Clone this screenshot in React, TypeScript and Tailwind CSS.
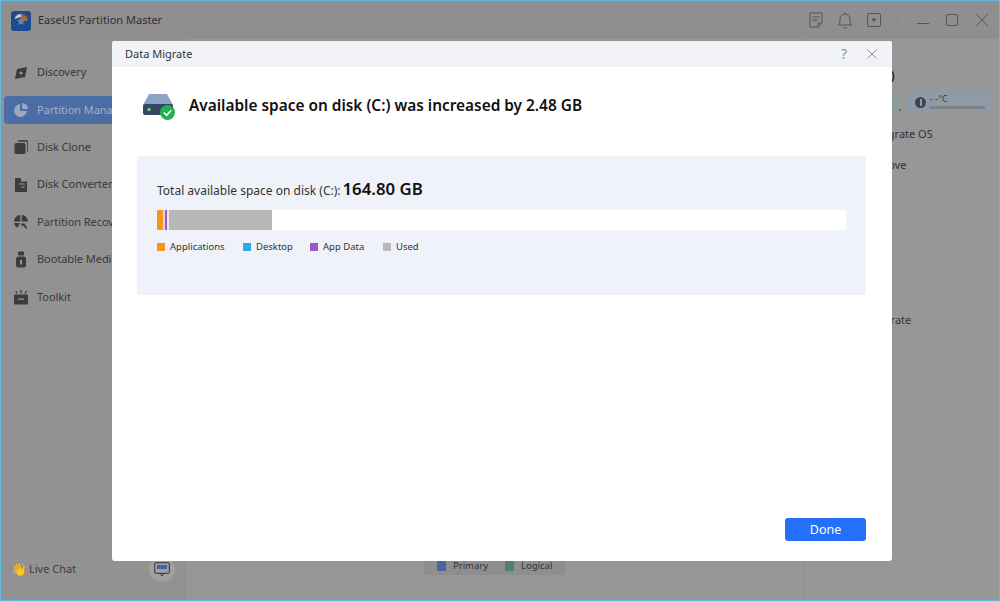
import React from "react";

const F = "font-['Noto_Sans','Open_Sans',sans-serif]";

function NavItem({ label, active, icon }: { label: string; active?: boolean; icon: React.ReactNode }) {
  return (
    <div className={`flex items-center h-[28px] mb-[9.4px] mx-[3px] pl-[9px] rounded-[4px] whitespace-nowrap overflow-hidden ${active ? "bg-[#4a6da6]" : ""}`}>
      <span className={`w-[16px] h-[18px] flex items-center justify-center mr-[8px] ${active ? "text-[#9aa9bf]" : "text-[#3c3c3f]"}`}>{icon}</span>
      <span className={`text-[11px] tracking-[-0.05px] ${active ? "text-[#a3afc2]" : "text-[#38383a]"}`}>{label}</span>
    </div>
  );
}

const I = {
  compass: (
    <svg width="14" height="14" viewBox="0 0 14 14" fill="currentColor"><path d="M3 3 13 1 11 11 1 13Z" /><circle cx="7" cy="7" r="1.6" fill="#979797" /></svg>
  ),
  pie: (
    <svg width="16" height="16" viewBox="0 0 16 16" fill="currentColor"><path d="M7 2a6.5 6.5 0 1 0 7 7H7Z" /><path d="M9 1a6 6 0 0 1 6 6H9Z" /></svg>
  ),
  clone: (
    <svg width="15" height="16" viewBox="0 0 15 16" fill="currentColor"><path d="M4 1h9a1.500 1.500 0 0 1 1 1v10a1 1 0 0 1-1 1V3H4Z" opacity=".8" /><rect x="0.500" y="4" width="11" height="11" rx="1.500" /></svg>
  ),
  conv: (
    <svg width="14" height="16" viewBox="0 0 14 16" fill="currentColor"><path d="M1 1h6v3h6v11H1Z" /><path d="M7 4h5M5 7h6M7 10h4" stroke="#979797" strokeWidth="1.200" /></svg>
  ),
  rec: (
    <svg width="16" height="16" viewBox="0 0 16 16" fill="currentColor"><path d="M7.300 1v6.500H1A6.500 6.500 0 0 1 7.300 1ZM8.700 1A6.500 6.500 0 0 1 15 7.500H8.700ZM1 9h6l-2.500 5A6.500 6.500 0 0 1 1 9Z" /><path d="M8 9.500h3.500l3 5h-2l-2-3-1.500 1Z" /></svg>
  ),
  usb: (
    <svg width="12" height="17" viewBox="0 0 12 17" fill="currentColor"><rect x="3" y="0.500" width="6" height="4" rx="1" /><rect x="1" y="5.500" width="10" height="11" rx="2.500" /><rect x="5" y="9" width="2" height="4.500" fill="#979797" /></svg>
  ),
  kit: (
    <svg width="16" height="16" viewBox="0 0 16 16" fill="currentColor"><rect x="1" y="5.500" width="14" height="10" rx="1" /><rect x="5" y="9.500" width="6" height="1.300" fill="#979797" /><path d="M4 4.500 3 2M8 4.500V1M12 4.500 13.500 2" stroke="currentColor" strokeWidth="1.300" /></svg>
  ),
};

function Legend({ color, label, w }: { color: string; label: string; w: string }) {
  return (
    <div className={`flex items-center ${w}`}>
      <span className={`w-[8px] h-[8px] mr-[5px] ${color}`} />
      <span className="text-[9.500px] leading-[12px] text-[#333]">{label}</span>
    </div>
  );
}

export default function App() {
  return (
    <div className={`${F} relative w-[1000px] h-[601px] overflow-hidden bg-[#979797] border border-[#5fb8de] flex flex-col`}>
      {/* title bar */}
      <header className="h-[38px] shrink-0 bg-[#8f8f8f] flex items-center pl-[9px]">
        <svg width="22" height="22" viewBox="0 0 22 22" className="mr-[6px] mt-[1px]">
          <rect width="20" height="20" x="1" y="1" rx="3" fill="#1f4a8c" />
          <path d="M11 4a7 7 0 0 1 7 7h-7Z" fill="#b0641c" />
          <path d="M4.500 9A7 7 0 0 1 11 4v3Z" fill="#c9c9c9" />
          <path d="m11 7 1.300 2.800 3 .3-2.300 2 .7 3-2.700-1.600-2.700 1.600.7-3-2.300-2 3-.3Z" fill="#5f86c0" />
        </svg>
        <span className="text-[11px] text-[#2f2f31]">EaseUS Partition Master</span>
        <div className="ml-auto flex items-center text-[#555] pr-[11px]">
          <svg width="14" height="16" viewBox="0 0 14 16" fill="none" stroke="currentColor" strokeWidth="1" className="mr-[14px]"><path d="M1 1h12v10l-4 4H1Z" /><path d="M3.500 5h7M3.500 8h5" /><path d="M9 15v-4h4" /></svg>
          <svg width="16" height="17" viewBox="0 0 16 17" fill="none" stroke="currentColor" strokeWidth="1" className="mr-[14px]"><path d="M1.500 13c1.500-1.500 1.500-3 1.500-6a5 5 0 0 1 10 0c0 3 0 4.500 1.500 6Z" /><path d="M6 15a2.200 2.200 0 0 0 4 0M8 2V.500" /></svg>
          <svg width="14" height="14" viewBox="0 0 14 14" fill="none" stroke="currentColor" strokeWidth="1" className="mr-[16px]"><rect x=".5" y=".5" width="13" height="13" rx="1.500" /><path d="M5 6h4L7 8.500Z" fill="currentColor" /></svg>
          <span className="w-px h-[19px] bg-[#888] mr-[19px]" />
          <span className="w-[12px] h-px bg-[#555] mr-[17px] mt-[7px]" />
          <span className="w-[12px] h-[12px] border border-[#555] rounded-[2px] mr-[18px]" />
          <svg width="12" height="12" viewBox="0 0 12 12" stroke="currentColor" strokeWidth="1"><path d="M.5.5l11 11M11.500.5l-11 11" /></svg>
        </div>
      </header>

      <div className="flex-1 flex min-h-0">
        {/* sidebar */}
        <aside className="w-[184px] shrink-0 bg-[#929292] flex flex-col pt-[19.500px]">
          <NavItem label="Discovery" icon={I.compass} />
          <NavItem label="Partition Manager" active icon={I.pie} />
          <NavItem label="Disk Clone" icon={I.clone} />
          <NavItem label="Disk Converter" icon={I.conv} />
          <NavItem label="Partition Recovery" icon={I.rec} />
          <NavItem label="Bootable Media" icon={I.usb} />
          <NavItem label="Toolkit" icon={I.kit} />
          <div className="mt-auto mb-[18px] flex items-center pl-[10px] pr-[10px] relative">
            <span className="text-[13px] leading-[16px] mr-[2px]">👋</span>
            <span className="text-[11px] text-[#3d3d40]">Live Chat</span>
            <span className="ml-auto w-[26px] h-[26px] rounded-full bg-[#a0a0a0] flex items-center justify-center">
              <svg width="16" height="15" viewBox="0 0 16 15" fill="none"><rect x=".7" y=".7" width="14.600" height="10.600" rx="1.500" stroke="#333" /><rect x="3" y="3" width="10" height="4" fill="#4a5fa8" /><path d="M6 11.500 8 14l2-2.500" stroke="#333" /></svg>
            </span>
          </div>
        </aside>

        {/* main */}
        <main className="flex-1 flex flex-col items-center justify-end border-l border-[#8c8c8c]">
          <div className="mb-[25px] h-[18px] w-[141px] ml-[-1px] rounded-[3px] bg-[#8e8e8e] flex items-center pl-[13px]">
            <div className="flex items-center w-[68px]">
              <span className="w-[9px] h-[10px] rounded-[1px] bg-[#47679d] mr-[7px]" />
              <span className="text-[9.500px] text-[#333]">Primary</span>
            </div>
            <span className="w-[9px] h-[10px] rounded-[1px] bg-[#517f70] mr-[7px]" />
            <span className="text-[9.500px] text-[#333]">Logical</span>
          </div>
        </main>

        {/* right panel */}
        <aside className="w-[195px] shrink-0 border-l border-[#8c8c8c] pl-[15px] pt-[28px]">
          <div className="text-[12px] font-semibold text-[#222] leading-[18px] whitespace-nowrap">Disk 0 (C:) (0)</div>
          <div className="flex mt-[6px] h-[23px]">
            <div className="w-[81px] h-[23px] rounded-[3px] bg-[#8f9d9a] flex items-end justify-end pb-[3px]"><span className="w-[2px] h-[2px] bg-[#3f7f6a]" /></div>
            <div className="ml-[7px] w-[85px] h-[23px] rounded-[3px] bg-[#909aa6] flex items-center pl-[7px]">
              <span className="w-[11px] h-[11px] rounded-full bg-[#3a4656] mr-[4px] flex items-center justify-center"><span className="w-[2px] h-[7px] bg-[#909aa6]" /></span>
              <div className="flex flex-col mt-[-3px]">
                <span className="text-[9px] leading-[10px] text-[#3a3a3c]">- -°C</span>
                <span className="w-[55px] h-[3px] bg-[#838383] mt-[2px]" />
              </div>
            </div>
          </div>
          <div className="text-[11px] text-[#333] leading-[16px] mt-[12px] pl-[55px] whitespace-nowrap">Migrate OS</div>
          <div className="text-[11px] text-[#333] leading-[16px] mt-[15px] pl-[45px] whitespace-nowrap">Remove</div>
          <div className="text-[11px] text-[#333] leading-[16px] mt-[139px] pl-[51px] whitespace-nowrap">Migrate</div>
        </aside>
      </div>

      {/* modal dialog */}
      <div className="absolute left-[111px] top-[40px] w-[780px] h-[520px] bg-white rounded-[3px] flex flex-col overflow-hidden">
        <div className="h-[26px] shrink-0 bg-[#f1f3f9] flex items-center pl-[13px] pr-[15px]">
          <span className="text-[11px] text-[#333]">Data Migrate</span>
          <span className="ml-auto text-[14px] leading-none text-[#8a8f9c] mr-[20px]">?</span>
          <svg width="10" height="10" viewBox="0 0 10 10" stroke="#8a8f9c" strokeWidth="1"><path d="M.5.5l9 9M9.500.5l-9 9" /></svg>
        </div>
        <div className="flex-1 flex flex-col pl-[25px] pr-[26px]">
          <div className="flex items-center mt-[24px] h-[30px] pl-[5px]">
            <svg width="34" height="28" viewBox="0 0 34 28" className="mr-[13px] shrink-0">
              <path d="M6 2h18l6 11H0Z" fill="#8ba3c4" transform="translate(1 0)" />
              <rect x="1" y="12" width="30" height="11" rx="2" fill="#37475f" />
              <circle cx="7" cy="17.500" r="1.600" fill="#7fe08a" />
              <circle cx="25.500" cy="20.500" r="7.500" fill="#22b14c" />
              <path d="m21.800 20.500 2.800 2.800 4.600-5" fill="none" stroke="#fff" strokeWidth="1.600" />
            </svg>
            <h1 className="text-[15.400px] font-semibold text-[#111] leading-[24px] whitespace-nowrap">Available space on disk (C:) was increased by 2.48 GB</h1>
          </div>
          <section className="mt-[35px] h-[139px] rounded-[3px] bg-[#eff2f9] pl-[20px] pr-[20px] pt-[20px]">
            <div className="flex items-baseline h-[26px]">
              <span className="text-[12px] text-[#333] mr-[2px]">Total available space on disk (C:):</span>
              <span className="text-[16.800px] font-semibold text-[#111]">164.80 GB</span>
            </div>
            <div className="mt-[8px] h-[20px] bg-white flex">
              <span className="w-[5.500px] bg-[#f7951d]" />
              <span className="w-[2px] bg-[#d8d8d8]" />
              <span className="w-[0.500px] bg-[#ffffff]" />
              <span className="w-[2px] bg-[#9a5bc9]" />
              <span className="w-[2px] bg-[#e8e8e8]" />
              <span className="w-[103px] bg-[#b8b8b8]" />
            </div>
            <div className="flex mt-[11px] h-[12px]">
              <Legend color="bg-[#f7951d]" label="Applications" w="w-[86px]" />
              <Legend color="bg-[#29aaef]" label="Desktop" w="w-[67px]" />
              <Legend color="bg-[#9a5bc9]" label="App Data" w="w-[73px]" />
              <Legend color="bg-[#b8b8b8]" label="Used" w="w-[60px]" />
            </div>
          </section>
          <div className="mt-auto mb-[20px] flex justify-end">
            <button className="w-[81px] h-[23px] pt-[2px] rounded-[3px] bg-[#2470fb] text-white text-[12.500px] leading-none">Done</button>
          </div>
        </div>
      </div>
    </div>
  );
}
